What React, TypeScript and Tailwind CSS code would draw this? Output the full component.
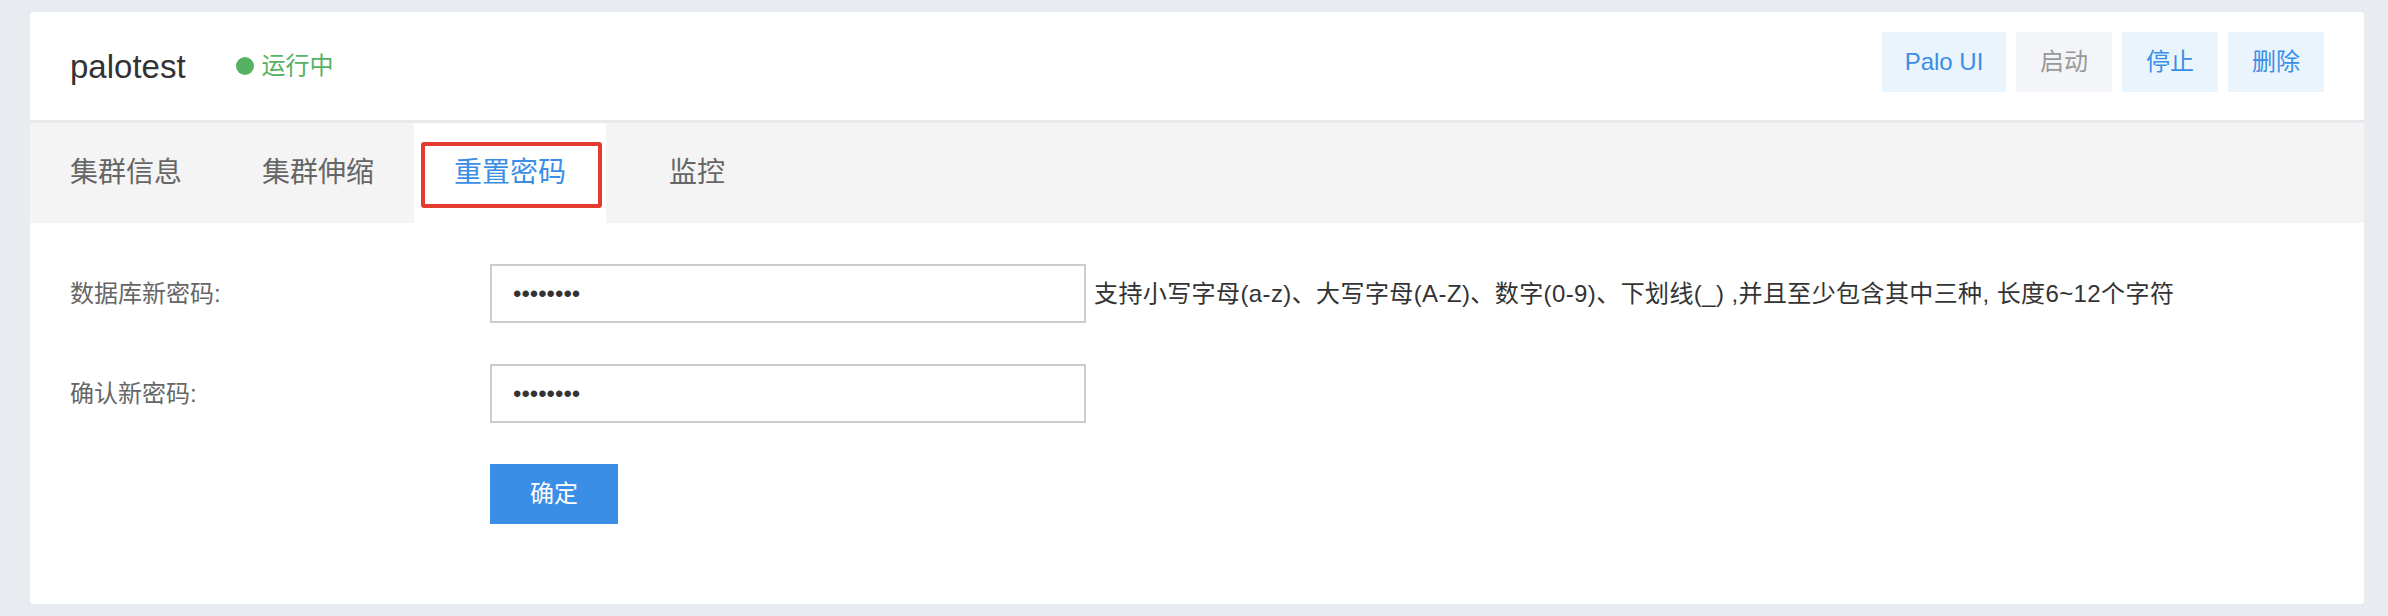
import { useState } from 'react';

const tabs = ['集群信息', '集群伸缩', '重置密码', '监控'];

export default function App() {
  const [active, setActive] = useState(2);
  const [pwd, setPwd] = useState('abc12345');
  const [confirm, setConfirm] = useState('abc12345');

  return (
    <div
      className="min-h-[616px] w-[2388px] bg-[#e8ebef] pt-[12px] pb-[12px] pl-[30px]"
      style={{ fontFamily: '"Liberation Sans", "Noto Sans CJK SC", sans-serif' }}
    >
      <div className="w-[2334px] overflow-hidden rounded-[4px] bg-white">
        {/* header */}
        <div className="flex h-[111px] items-center justify-between border-b-[3px] border-[#e8e9ed] px-[40px]">
          <div className="flex items-center">
            <span className="text-[33px] leading-none text-[#333]">palotest</span>
            <span className="ml-[50px] h-[18px] w-[18px] rounded-full bg-[#55b262]" />
            <span className="ml-[8px] text-[24px] leading-none text-[#55b262]">运行中</span>
          </div>
          <div className="mb-[9px] flex gap-[10px]">
            <button className="h-[60px] w-[124px] bg-[#eaf4fd] text-[24px] text-[#3a8ee6]">Palo UI</button>
            <button className="h-[60px] w-[96px] bg-[#f4f5f8] text-[24px] text-[#999]">启动</button>
            <button className="h-[60px] w-[96px] bg-[#eaf4fd] text-[24px] text-[#3a8ee6]">停止</button>
            <button className="h-[60px] w-[96px] bg-[#eaf4fd] text-[24px] text-[#3a8ee6]">删除</button>
          </div>
        </div>

        {/* tabs */}
        <div className="flex h-[100px] bg-[#f4f4f5]">
          {tabs.map((t, i) => (
            <div
              key={t}
              onClick={() => setActive(i)}
              className={`relative flex h-full cursor-pointer items-center text-[28px] leading-none ${
                i === 3 ? 'pl-[63px] pr-[40px]' : 'px-[40px]'
              } ${i === active ? 'bg-white text-[#3a8ee6]' : 'text-[#666]'}`}
            >
              {t}
              {i === 2 && (
                <span className="pointer-events-none absolute top-[19px] right-[4px] bottom-[15px] left-[7px] rounded-[3px] border-[4px] border-[#e33b30]" />
              )}
            </div>
          ))}
        </div>

        {/* form */}
        <div className="flex flex-col gap-[41px] px-[40px] pt-[41px] pb-[80px]">
          <div className="flex items-center">
            <label className="w-[420px] text-[24px] leading-none text-[#666]">数据库新密码:</label>
            <input
              type="password"
              value={pwd}
              onChange={(e) => setPwd(e.target.value)}
              className="h-[59px] w-[596px] border-2 border-[#ccc] px-[21px] text-[24px] text-[#333] outline-none"
            />
            <span className="ml-[8px] text-[24px] leading-none tracking-[0.4px] text-[#333]">
              支持小写字母(a-z)、大写字母(A-Z)、数字(0-9)、下划线(_) ,并且至少包含其中三种, 长度6~12个字符
            </span>
          </div>
          <div className="flex items-center">
            <label className="w-[420px] text-[24px] leading-none text-[#666]">确认新密码:</label>
            <input
              type="password"
              value={confirm}
              onChange={(e) => setConfirm(e.target.value)}
              className="h-[59px] w-[596px] border-2 border-[#ccc] px-[21px] text-[24px] text-[#333] outline-none"
            />
          </div>
          <div className="flex">
            <div className="w-[420px]" />
            <button className="h-[60px] w-[128px] bg-[#3a8ee6] text-[24px] text-white">确定</button>
          </div>
        </div>
      </div>
    </div>
  );
}
